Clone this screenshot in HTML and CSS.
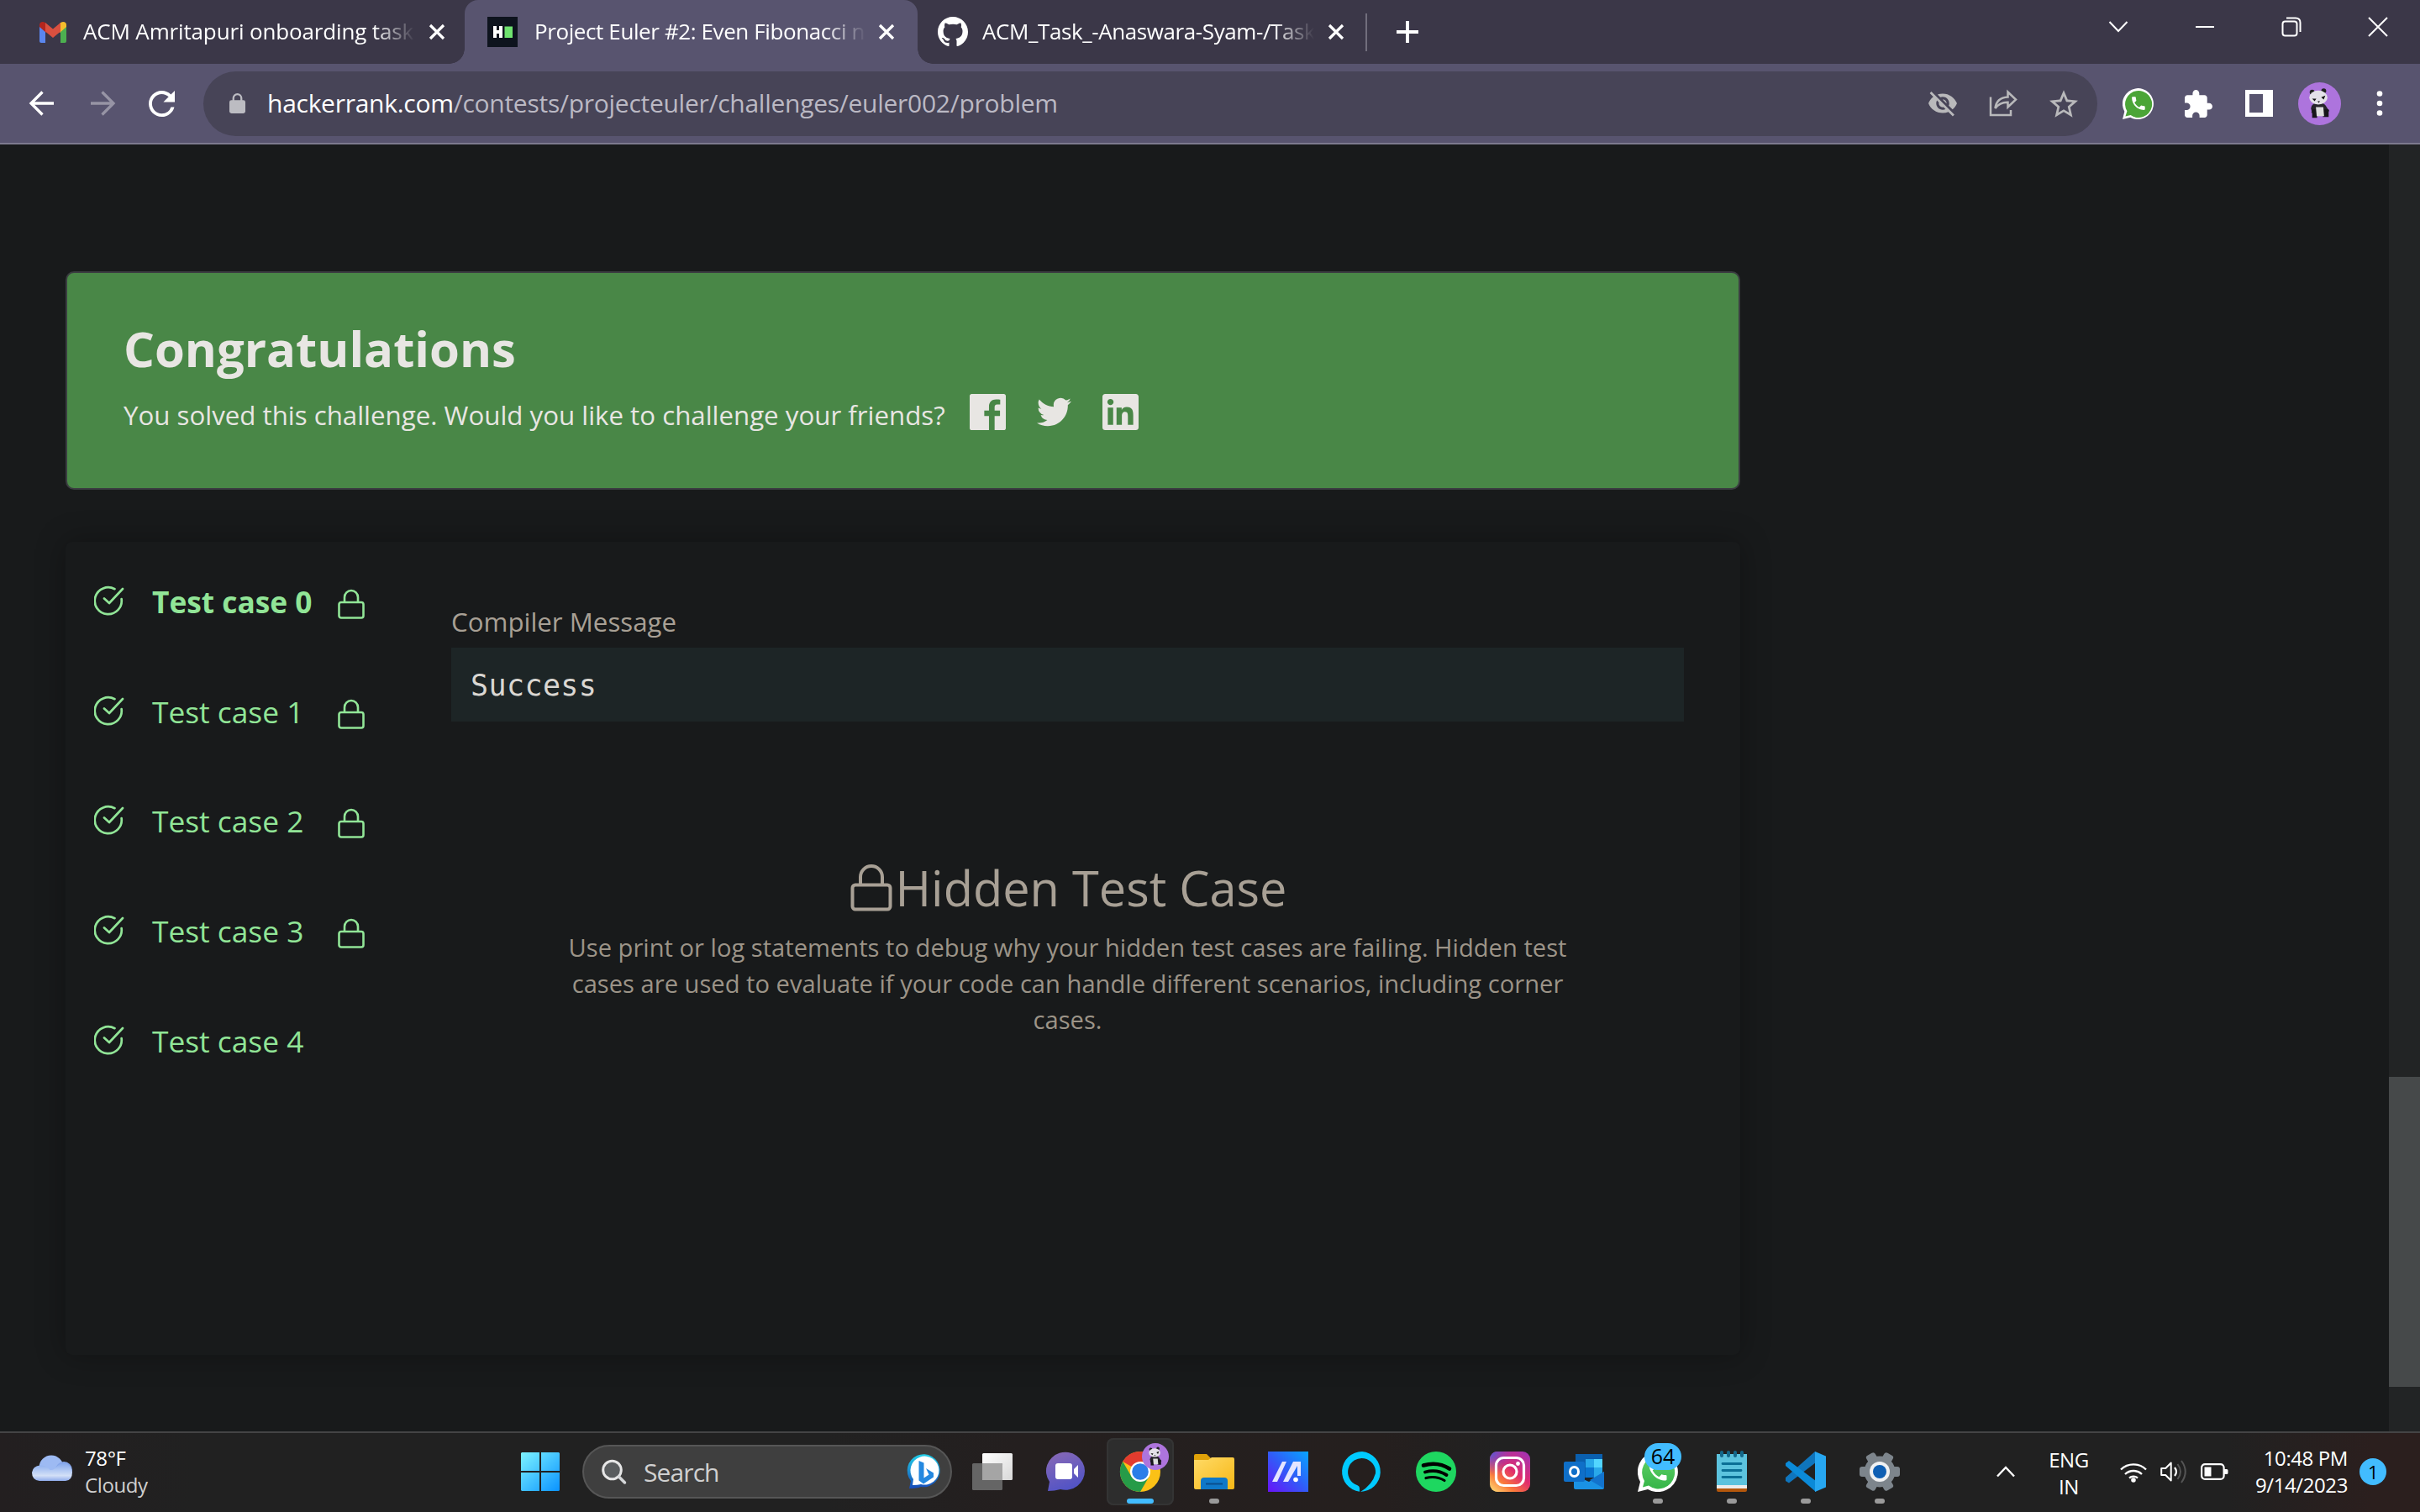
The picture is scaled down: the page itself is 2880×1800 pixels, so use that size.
FILE: index.html
```html
<!DOCTYPE html>
<html lang="en">
<head>
<meta charset="utf-8">
<title>Project Euler #2: Even Fibonacci numbers</title>
<link rel="stylesheet" href="styles.css">
</head>
<body>
<svg class="defs" width="0" height="0" aria-hidden="true">
  <symbol id="x" viewBox="0 0 20 20"><path d="M2 2l16 16M18 2L2 18" fill="none" stroke="#fff" stroke-width="3.200"/></symbol>
  <symbol id="check" viewBox="0 0 36 36"><path d="M24.500 4.200A16 16 0 1 0 32.600 16M12 15.500l6 5.500L34 4" fill="none" stroke="#91e597" stroke-width="2.700" stroke-linecap="round" stroke-linejoin="round"/></symbol>
  <symbol id="lock" viewBox="0 0 32 36"><path d="M4 16h24a2.500 2.500 0 0 1 2.500 2.500v13.500a2.500 2.500 0 0 1-2.500 2.500h-24a2.500 2.500 0 0 1-2.500-2.500v-13.500a2.500 2.500 0 0 1 2.500-2.500zM8 16v-6a8 8 0 0 1 16 0v6" fill="none" stroke="currentColor" stroke-width="2.600"/></symbol>
  <symbol id="phone" viewBox="0 0 24 24"><path d="M6.620 10.790c1.440 2.830 3.760 5.140 6.590 6.590l2.200-2.200c.27-.27.67-.36 1.020-.24 1.120.37 2.330.57 3.570.57.55 0 1 .45 1 1V20c0 .55-.45 1-1 1-9.390 0-17-7.610-17-17 0-.55.45-1 1-1h3.500c.55 0 1 .45 1 1 0 1.250.2 2.450.57 3.570.11.35.03.74-.25 1.020z" fill="#fff"/></symbol>
  <symbol id="panda" viewBox="0 0 52 52">
    <circle cx="26" cy="26" r="26" fill="#ad74dd"/>
    <circle cx="17" cy="12" r="3" fill="#222"/><circle cx="31" cy="10.500" r="3" fill="#222"/>
    <ellipse cx="25" cy="31.500" rx="9.500" ry="7" fill="#26242a"/>
    <path d="M17 30l-1 7 4 1zM33 28l5 7-5 1z" fill="#26242a"/>
    <path d="M17 33h6v10h-6zM30 33h7v9h-7z" fill="#17151a"/>
    <path d="M21.500 30h9l1 11h-9z" fill="#ddd"/>
    <ellipse cx="24.500" cy="18.500" rx="11" ry="8.500" fill="#e4e1e8"/>
    <path d="M17 20l5 0-2 3zM28 18l5-2-2 5zM23.500 23h3l-1.500 2z" fill="#111"/>
  </symbol>
  <symbol id="whatsapp" viewBox="0 0 48 48">
    <path d="M0 48l3-12A24 24 0 1 1 12 45z" fill="#fff"/>
    <path d="M6 42.500l2-7.500A19.500 19.500 0 1 1 13 40.500z" fill="url(#waG)"/>
    <use href="#phone" x="10" y="10" width="28" height="28"/>
  </symbol>
  <symbol id="whatsapp-web" viewBox="0 0 48 48">
    <path d="M0 48l3-12A24 24 0 1 1 12 45z" fill="#fff"/>
    <path d="M4.500 43.500l2.500-8A20.800 20.800 0 1 1 12.500 41.500z" fill="#4ba537"/>
    <use href="#phone" x="11" y="10" width="27" height="27"/>
  </symbol>
  <linearGradient id="waG" x1="0" y1="0" x2="0" y2="1"><stop offset="0" stop-color="#5fd067"/><stop offset="1" stop-color="#35b548"/></linearGradient>
</svg>

<header class="tabstrip">
  <div class="tab tab-mail">
    <svg width="34" height="27" viewBox="0 0 34 27"><path d="M1 4v20q0 2 2 2h5V9z" fill="#5a86ee"/><path d="M33 4v20q0 2-2 2h-5V9z" fill="#4caf50"/><path d="M1 5q0-4 4-4 2 0 4 2v11L1 7z" fill="#b3261e"/><path d="M33 5q0-4-4-4-2 0-4 2v11l8-7z" fill="#f5bd2c"/><path d="M8 2l9 7.500L26 2v10.500L17 20 8 12.500z" fill="#d9503f"/></svg>
    <span class="tab-title">ACM Amritapuri onboarding task</span>
    <svg width="20" height="20"><use href="#x"/></svg>
  </div>
  <div class="tab tab-active">
    <svg width="36" height="36" viewBox="0 0 36 36"><path fill="#0e141e" d="M0 0h36v36H0z"/><path d="M7 11h4v5h3v-5h4v14h-4v-5h-3v5H7z" fill="#fff"/><path d="M20.500 11.500H30V25h-9.500z" fill="#6fe36f"/></svg>
    <span class="tab-title">Project Euler #2: Even Fibonacci n</span>
    <svg width="20" height="20"><use href="#x"/></svg>
  </div>
  <div class="tab tab-git">
    <svg width="36" height="36" viewBox="0 0 16 16"><path fill="#fff" d="M8 0C3.580 0 0 3.580 0 8c0 3.540 2.290 6.530 5.470 7.590.4.07.55-.17.55-.38 0-.19-.01-.82-.01-1.490-2.010.37-2.530-.49-2.690-.94-.09-.23-.48-.94-.82-1.130-.28-.15-.68-.52-.01-.53.63-.01 1.080.58 1.230.82.72 1.210 1.870.87 2.330.66.07-.52.28-.87.51-1.070-1.780-.2-3.640-.89-3.640-3.950 0-.87.31-1.590.82-2.150-.08-.2-.36-1.020.08-2.120 0 0 .67-.21 2.200.82.64-.18 1.320-.27 2-.27.68 0 1.360.09 2 .27 1.530-1.040 2.200-.82 2.200-.82.44 1.100.16 1.920.08 2.120.51.56.82 1.270.82 2.150 0 3.070-1.870 3.750-3.650 3.950.29.25.54.73.54 1.480 0 1.070-.01 1.930-.01 2.200 0 .21.15.46.55.38A8.013 8.013 0 0016 8c0-4.420-3.580-8-8-8z"/></svg>
    <span class="tab-title">ACM_Task_-Anaswara-Syam-/Task</span>
    <svg width="20" height="20"><use href="#x"/></svg>
  </div>
  <div class="tab-divider"></div>
  <svg class="newtab" width="28" height="28" viewBox="0 0 28 28"><path d="M14 1v26M1 14h26" stroke="#fff" stroke-width="3.800"/></svg>
  <div class="window-controls">
    <svg width="24" height="24" viewBox="0 0 24 24"><path d="M1.500 6L12 17 22.500 6" class="thin"/></svg>
    <svg width="24" height="24" viewBox="0 0 24 24"><path d="M1 12h22" class="thin"/></svg>
    <svg width="24" height="24" viewBox="0 0 24 24"><rect x="1.500" y="5.500" width="17" height="17" rx="3" class="thin"/><path d="M6 1.500h11q5.500 0 5.500 5.500v11" class="thin"/></svg>
    <svg width="24" height="24" viewBox="0 0 24 24"><path d="M1 1l22 22M23 1L1 23" class="thin"/></svg>
  </div>
</header>

<nav class="toolbar">
  <div class="slots">
    <svg width="30" height="30" viewBox="0 0 30 30"><path d="M29 15H3M15.500 1.500L2 15l13.500 13.500" fill="none" stroke="#fff" stroke-width="3.300"/></svg>
    <svg width="30" height="30" viewBox="0 0 30 30"><path d="M1 15h26M14.500 1.500L28 15 14.500 28.500" fill="none" stroke="#9794a5" stroke-width="3.300"/></svg>
    <svg class="reload" width="31" height="31" viewBox="4 4 16 16"><path fill="#fff" d="M17.650 6.350A7.958 7.958 0 0012 4c-4.420 0-7.990 3.580-7.990 8s3.570 8 7.990 8c3.730 0 6.840-2.550 7.730-6h-2.080A5.990 5.990 0 0112 18c-3.310 0-6-2.690-6-6s2.690-6 6-6c1.660 0 3.140.69 4.220 1.780L13 11h7V4l-2.350 2.350z"/></svg>
  </div>
  <div class="omnibox">
    <svg width="19" height="26" viewBox="0 0 20 26"><path d="M5 10V6.500a5 5 0 0 1 10 0V10" fill="none" stroke="#bcbcc2" stroke-width="2.400"/><rect y="9" width="20" height="16.500" rx="2.500" fill="#bcbcc2"/></svg>
    <span class="url"><b>hackerrank.com</b>/contests/projecteuler/challenges/euler002/problem</span>
    <div class="slots">
      <svg width="34" height="34" viewBox="1 1 22 22"><path fill="#b9b9bb" d="M12 7c2.760 0 5 2.240 5 5 0 .65-.13 1.260-.36 1.830l2.920 2.920c1.510-1.260 2.700-2.890 3.430-4.750-1.730-4.390-6-7.500-11-7.500-1.400 0-2.740.25-3.980.7l2.160 2.160C10.740 7.130 11.350 7 12 7zM2 4.270l2.280 2.280.46.46C3.080 8.300 1.780 10.020 1 12c1.730 4.390 6 7.500 11 7.500 1.550 0 3.030-.3 4.380-.84l.42.42L19.730 22 21 20.730 3.270 3 2 4.270zM7.530 9.800l1.550 1.550c-.05.21-.08.43-.08.65 0 1.660 1.340 3 3 3 .22 0 .44-.03.65-.08l1.550 1.550c-.67.33-1.410.53-2.200.53-2.760 0-5-2.240-5-5 0-.79.2-1.530.53-2.200zm4.310-.78l3.150 3.150.02-.16c0-1.660-1.340-3-3-3l-.17.01z"/></svg>
      <svg width="34" height="34" viewBox="0 0 34 34"><path d="M2 9.500V31h24v-6M7.500 23c1-9 6-13 15-13.500V3.500L32 12.500 22.500 21.500v-5.800C15 15.500 11 18 7.500 23z" fill="none" stroke="#b9b9bb" stroke-width="2.500"/></svg>
      <svg width="34" height="33" viewBox="2 2 20 19"><path fill="#b9b9bb" d="M22 9.240l-7.190-.62L12 2 9.190 8.630 2 9.240l5.460 4.730L5.820 21 12 17.270 18.180 21l-1.630-7.030L22 9.240zM12 15.400l-3.760 2.270 1-4.280-3.320-2.880 4.380-.38L12 6.100l1.710 4.040 4.380.38-3.320 2.880 1 4.280L12 15.400z"/></svg>
    </div>
  </div>
  <div class="slots">
    <svg width="37" height="37"><use href="#whatsapp-web"/></svg>
    <svg width="33" height="33" viewBox="2 1 21 21"><path fill="#fff" d="M20.500 11H19V7c0-1.100-.9-2-2-2h-4V3.500C13 2.120 11.880 1 10.500 1S8 2.120 8 3.500V5H4c-1.100 0-1.990.9-1.990 2v3.800H3.500c1.490 0 2.700 1.210 2.700 2.700s-1.210 2.700-2.700 2.700H2V20c0 1.100.9 2 2 2h3.800v-1.500c0-1.490 1.210-2.700 2.700-2.700 1.490 0 2.700 1.210 2.700 2.700V22H17c1.100 0 2-.9 2-2v-4h1.500c1.380 0 2.500-1.120 2.500-2.500S21.880 11 20.500 11z"/></svg>
    <svg width="33" height="32" viewBox="0 0 33 32"><path fill="#fff" fill-rule="evenodd" d="M0 0h33v32H0zM5 5v22h16V5z"/></svg>
    <svg width="51" height="51"><use href="#panda"/></svg>
    <svg width="8" height="32" viewBox="0 0 8 32"><circle cx="4" cy="4.500" r="3.300" fill="#fff"/><circle cx="4" cy="16" r="3.300" fill="#fff"/><circle cx="4" cy="27.500" r="3.300" fill="#fff"/></svg>
  </div>
</nav>

<main class="page">
  <div class="content">
    <section class="banner">
      <h1>Congratulations</h1>
      <div class="share">
        <p>You solved this challenge. Would you like to challenge your friends?</p>
        <svg width="43" height="43" viewBox="0 0 24 24"><path fill="#e8e6e3" d="M22.676 0H1.324C.593 0 0 .593 0 1.324v21.352C0 23.408.593 24 1.324 24h11.494v-9.294H9.689v-3.621h3.129V8.410c0-3.099 1.894-4.785 4.659-4.785 1.325 0 2.464.097 2.796.141v3.240h-1.921c-1.500 0-1.792.721-1.792 1.771v2.311h3.584v3.630H16.560V24h6.115c.733 0 1.325-.592 1.325-1.324V1.324C24 .593 23.408 0 22.676 0"/></svg>
        <svg width="41" height="43" viewBox="0 0 24 24"><path fill="#e8e6e3" d="M23.953 4.570a10 10 0 01-2.825.775 4.958 4.958 0 002.163-2.723c-.951.555-2.005.959-3.127 1.184a4.920 4.920 0 00-8.384 4.482C7.690 8.095 4.067 6.130 1.640 3.162a4.822 4.822 0 00-.666 2.475c0 1.710.87 3.213 2.188 4.096a4.904 4.904 0 01-2.228-.616v.06a4.923 4.923 0 003.946 4.827 4.996 4.996 0 01-2.212.085 4.936 4.936 0 004.604 3.417 9.867 9.867 0 01-6.102 2.105c-.39 0-.779-.023-1.170-.067a13.995 13.995 0 007.557 2.209c9.053 0 13.998-7.496 13.998-13.985 0-.21 0-.42-.015-.63A9.935 9.935 0 0024 4.590z"/></svg>
        <svg width="43" height="43" viewBox="0 0 24 24"><path fill="#e8e6e3" d="M20.447 20.452h-3.554v-5.569c0-1.328-.027-3.037-1.852-3.037-1.853 0-2.136 1.445-2.136 2.939v5.667H9.351V9h3.414v1.561h.046c.477-.9 1.637-1.850 3.370-1.850 3.601 0 4.267 2.370 4.267 5.455v6.286zM5.337 7.433c-1.144 0-2.063-.926-2.063-2.065 0-1.138.92-2.063 2.063-2.063 1.140 0 2.064.925 2.064 2.063 0 1.139-.925 2.065-2.064 2.065zm1.782 13.019H3.555V9h3.564v11.452zM22.225 0H1.771C.792 0 0 .774 0 1.729v20.542C0 23.227.792 24 1.771 24h20.451C23.200 24 24 23.227 24 22.271V1.729C24 .774 23.200 0 22.222 0h.003z"/></svg>
      </div>
    </section>
    <section class="results">
      <ul class="cases">
        <li class="current"><svg width="36" height="36"><use href="#check"/></svg><span>Test case 0</span><svg class="case-lock" width="32" height="36"><use href="#lock"/></svg></li>
        <li><svg width="36" height="36"><use href="#check"/></svg><span>Test case 1</span><svg class="case-lock" width="32" height="36"><use href="#lock"/></svg></li>
        <li><svg width="36" height="36"><use href="#check"/></svg><span>Test case 2</span><svg class="case-lock" width="32" height="36"><use href="#lock"/></svg></li>
        <li><svg width="36" height="36"><use href="#check"/></svg><span>Test case 3</span><svg class="case-lock" width="32" height="36"><use href="#lock"/></svg></li>
        <li><svg width="36" height="36"><use href="#check"/></svg><span>Test case 4</span></li>
      </ul>
      <div class="detail">
        <h2>Compiler Message</h2>
        <pre>Success</pre>
        <h3><svg width="50" height="56" viewBox="0 0 50 56"><path d="M6 24.500h38a3.500 3.500 0 0 1 3.500 3.500v22a3.500 3.500 0 0 1-3.500 3.500h-38a3.500 3.500 0 0 1-3.500-3.500v-22a3.500 3.500 0 0 1 3.500-3.500zM12 24v-9a13 13 0 0 1 26 0v9" fill="none" stroke="#a8a095" stroke-width="4"/></svg><span>Hidden Test Case</span></h3>
        <p>Use print or log statements to debug why your hidden test cases are failing. Hidden test<br>cases are used to evaluate if your code can handle different scenarios, including corner<br>cases.</p>
      </div>
    </section>
  </div>
  <div class="scrollbar"><div class="thumb"></div></div>
</main>

<footer class="taskbar">
  <div class="weather">
    <svg width="48" height="31" viewBox="0 0 48 31"><defs><linearGradient id="cl" x1="0" y1="0" x2="0" y2="1"><stop offset="0" stop-color="#85a9ee"/><stop offset=".7" stop-color="#d3e0f7"/><stop offset="1" stop-color="#8fabeb"/></linearGradient></defs><circle cx="23" cy="15" r="14.500" fill="#9dbaf3"/><circle cx="38" cy="18" r="10" fill="#86a6ea"/><path d="M10 12.500q7 0 11 5 4 2 9-4 5-5 11-3 6 3 7 10 0 10-8 10.500H9Q0 30 0 21q1-8 10-8.500z" fill="url(#cl)"/></svg>
    <div class="weather-text"><span>78°F</span><em>Cloudy</em></div>
  </div>
  <div class="apps">
    <div class="app"><svg width="46" height="46" viewBox="0 0 46 46"><defs><linearGradient id="wn" gradientUnits="userSpaceOnUse" x1="0" y1="0" x2="46" y2="46"><stop offset="0" stop-color="#7df3ff"/><stop offset="1" stop-color="#0a93ff"/></linearGradient></defs><path d="M1 0h21v22H0V1zM24 0h21l1 1v21H24zM0 24h22v22H1l-1-1zM24 24h22v21l-1 1H24z" fill="url(#wn)"/></svg></div>
    <div class="search">
      <svg width="30" height="30" viewBox="0 0 30 30"><circle cx="12.500" cy="13" r="10.800" fill="#5a5d5f" stroke="#e6e6e6" stroke-width="3"/><path d="M20.500 21l7 7" stroke="#d5d7d9" stroke-width="3.500" stroke-linecap="round"/></svg>
      <span>Search</span>
      <svg width="40" height="40" viewBox="0 0 40 40"><defs><linearGradient id="bg" x1="0" y1="0" x2="0" y2="1"><stop offset="0" stop-color="#21cfe8"/><stop offset="1" stop-color="#174ab8"/></linearGradient></defs><path d="M0 40l2-9A19.500 19.500 0 1 1 14 38q-5 2-14 2z" fill="url(#bg)"/><path d="M4 36l1-7A17 17 0 1 1 14 35q-4 1-10 1z" fill="#fff"/><path d="M11.500 7l6 2.500v18l6-4-3.500-7.500 9 5.500v5l-12 8-5.500-4z" fill="#2488e0"/></svg>
    </div>
    <div class="app"><svg width="48" height="44" viewBox="0 0 48 44"><defs><linearGradient id="tv" x1="0" y1="0" x2="1" y2="1"><stop offset="0" stop-color="#fff"/><stop offset="1" stop-color="#d8d8d8"/></linearGradient></defs><rect x="12" width="36" height="32" rx="1.500" fill="url(#tv)"/><rect y="12" width="36" height="32" rx="1.500" fill="#656565"/><path d="M12 12h24v20H12z" fill="#a5a5a5"/></svg></div>
    <div class="app"><svg width="48" height="46" viewBox="-2 0 48 46"><defs><linearGradient id="ch" x1="0" y1="0" x2=".4" y2="1"><stop offset="0" stop-color="#8b6ab5"/><stop offset="1" stop-color="#5354c5"/></linearGradient></defs><path d="M0 46l2-11A23 22.500 0 1 1 15 44q-7 2-15 2z" fill="url(#ch)"/><rect x="9" y="13" width="20" height="19" rx="3" fill="#fff"/><path d="M31 20l5-5v15l-5-5z" fill="#fff"/></svg></div>
    <div class="app open focus"><svg width="48" height="48" viewBox="0 0 48 48"><circle cx="24" cy="24" r="24" fill="#fbc116"/><path d="M24 24L3.200 12A24 24 0 0 1 44.800 12H24z" fill="#e33b2e"/><path d="M13.600 30L3.200 12A24 24 0 0 0 24 48l10.400-18z" fill="#269b48"/><circle cx="24" cy="24" r="12" fill="#fff"/><circle cx="24" cy="24" r="9.800" fill="#2a7de9"/></svg><svg class="who" width="32" height="32"><use href="#panda"/></svg></div>
    <div class="app open"><svg width="48" height="42" viewBox="0 0 48 42"><defs><linearGradient id="fo" x1="0" y1="0" x2="1" y2="1"><stop offset="0" stop-color="#ffdb67"/><stop offset="1" stop-color="#f7b716"/></linearGradient></defs><path d="M0 10V2q0-2 2-2h13l5 5v5z" fill="#e0a108"/><path d="M0 7h17l4-3h25q2 0 2 2v34q0 2-2 2H2q-2 0-2-2z" fill="url(#fo)"/><path d="M8 42V32q0-4 4-4h24q4 0 4 4v10z" fill="#0f78c8"/><path d="M14 34.500h20v2H14z" fill="#0b4e8d"/></svg></div>
    <div class="app"><svg width="48" height="48" viewBox="0 0 48 48"><defs><linearGradient id="ma" x1="0" y1="1" x2="1" y2="0"><stop offset="0" stop-color="#6a12f7"/><stop offset=".5" stop-color="#315cf8"/><stop offset="1" stop-color="#07a5ff"/></linearGradient></defs><path fill="url(#ma)" d="M0 0h48v48H0z"/><path d="M5 36l12-24h5L11 36zM18 36l12-24h9v17h-4V17L24 36z" fill="#e4e5ff"/><circle cx="33" cy="33.500" r="2.800" fill="#fff"/></svg></div>
    <div class="app"><svg width="48" height="48" viewBox="0 0 48 48"><path d="M24 0A24 24 0 0 0 21 47.800V44q0-3-3-4a16.500 16.500 0 1 1 22-14Q36 40 22 47.900A24 24 0 0 0 24 0z" fill="#00caff"/></svg></div>
    <div class="app"><svg width="48" height="48" viewBox="0 0 48 48"><circle cx="24" cy="24" r="24" fill="#1ed760"/><path d="M9 16.500q17-5 31 4" fill="none" stroke="#000" stroke-width="4.600" stroke-linecap="round"/><path d="M11 24.500q14-4 25.500 3.500" fill="none" stroke="#000" stroke-width="3.900" stroke-linecap="round"/><path d="M12 31.500q12-3 22 3" fill="none" stroke="#000" stroke-width="3.200" stroke-linecap="round"/></svg></div>
    <div class="app"><svg width="48" height="48" viewBox="0 0 48 48"><defs><linearGradient id="ig" x1=".9" y1="0" x2=".1" y2="1"><stop offset="0" stop-color="#a233b4"/><stop offset=".45" stop-color="#e02c6d"/><stop offset=".75" stop-color="#fb7a3a"/><stop offset="1" stop-color="#ffd270"/></linearGradient><radialGradient id="ig2" cx="0" cy="0" r=".6"><stop offset="0" stop-color="#4a5fe0"/><stop offset="1" stop-color="#7a3bd0" stop-opacity="0"/></radialGradient></defs><rect width="48" height="48" rx="9" fill="url(#ig)"/><rect width="48" height="48" rx="9" fill="url(#ig2)"/><rect x="7.500" y="7.500" width="33" height="33" rx="9" fill="none" stroke="#fff" stroke-width="3.200"/><circle cx="24" cy="24" r="8" fill="none" stroke="#fff" stroke-width="3.200"/><circle cx="33.500" cy="14.500" r="2.400" fill="#fff"/></svg></div>
    <div class="app"><svg width="48" height="48" viewBox="0 0 48 48"><path d="M14 3h32v28H14z" fill="#0a5fae"/><path d="M26 9h10v10H26z" fill="#29a8ea"/><path d="M36 9h10v10H36z" fill="#52d5ff"/><path d="M26 19h10v12H26z" fill="#0a74cf"/><path d="M36 19h10v12H36z" fill="#29a8ea"/><path d="M12 28l18 8 18-12v19q0 2-2 2H14q-2 0-2-2z" fill="#1a92e4"/><path d="M48 24v20L31 34z" fill="#1273cd"/><rect y="12" width="25" height="24" rx="2" fill="#0f6fc8"/><ellipse cx="12.500" cy="24" rx="5" ry="5.500" fill="none" stroke="#fff" stroke-width="3"/></svg></div>
    <div class="app open"><svg width="48" height="48"><use href="#whatsapp"/></svg><span class="badge">64</span></div>
    <div class="app open"><svg width="36" height="48" viewBox="0 0 36 48"><path d="M0 44h36v2q0 2-2 2H2q-2 0-2-2z" fill="#b4570c"/><path d="M0 39h36v5H0z" fill="#ececec"/><path d="M0 3h36v37H0z" fill="#5cc3de"/><path d="M6 1v4M14 1v4M22 1v4M30 1v4" stroke="#14688a" stroke-width="4" stroke-linecap="round"/><path d="M7 14.500h22M7 22.500h22M7 30.500h22" stroke="#0b6f96" stroke-width="2.800" stroke-linecap="round"/></svg></div>
    <div class="app open"><svg width="48" height="48" viewBox="0 0 48 48"><path d="M35 0L0 31v4l4 2.500L36 13z" fill="#0f75bd"/><path d="M0 14l4-3L36 35v13L0 17z" fill="#0b8ad8"/><path d="M35 0l13 5.500v37L35 48z" fill="#27a7f1"/></svg></div>
    <div class="app open"><svg width="48" height="48" viewBox="0 0 48 48"><g fill="#7d858c"><circle cx="24" cy="24" r="18.500"/><rect x="0" y="18" width="48" height="12" rx="3"/><rect x="0" y="18" width="48" height="12" rx="3" transform="rotate(60 24 24)"/><rect x="0" y="18" width="48" height="12" rx="3" transform="rotate(120 24 24)"/></g><circle cx="24" cy="24" r="12" fill="#f0f1f2"/><circle cx="24" cy="24" r="8" fill="#0f5fb3"/></svg></div>
  </div>
  <div class="tray">
    <svg class="up" width="22" height="14" viewBox="0 0 22 14"><path d="M1 12.500L11 2l10 10.500" fill="none" stroke="#fff" stroke-width="2.400"/></svg>
    <div class="lang"><span>ENG</span><span>IN</span></div>
    <div class="status">
      <svg width="32" height="28" viewBox="0 0 32 28"><path d="M1 11.500a21.500 21.500 0 0 1 30 0M6 17a14.500 14.500 0 0 1 20 0M11 21.500a8 8 0 0 1 10 0" fill="none" stroke="#fff" stroke-width="2.400"/><circle cx="16" cy="24" r="2.800" fill="#fff"/></svg>
      <svg width="32" height="28" viewBox="0 0 32 28"><path d="M1.200 10h5l6.500-6.500v21L6.200 18h-5z" fill="none" stroke="#fff" stroke-width="2" stroke-linejoin="round"/><path d="M17 9q4 5 0 10" fill="none" stroke="#fff" stroke-width="2.200"/><path d="M20.500 5q7 9 0 18M25 1q9.500 13 0 26" fill="none" stroke="#555" stroke-width="2"/></svg>
      <svg width="33" height="20" viewBox="0 0 33 20"><rect x="1.100" y="1.100" width="26.500" height="17.800" rx="4" fill="none" stroke="#fff" stroke-width="2.200"/><path d="M4.500 4.500h8v11h-8zM28 7h3q1.500 0 1.500 1.500v3Q32.500 13 31 13h-3z" fill="#fff"/></svg>
    </div>
    <div class="clock"><span>10:48 PM</span><span>9/14/2023</span></div>
    <div class="notif">1</div>
  </div>
</footer>
</body>
</html>
```
FILE: styles.css
```css
* { box-sizing: border-box; margin: 0; padding: 0; }
body {
  width: 2880px; height: 1800px; overflow: hidden;
  display: flex; flex-direction: column;
  background: #181a1b; color: #fff;
  font-family: "Open Sans", "Noto Sans", sans-serif;
}
svg { display: block; flex: none; overflow: visible; }
em { font-style: normal; }
.defs { position: absolute; }

/* Browser tabs */
.tabstrip { display: flex; height: 76px; background: #3b3748; }
.tab { display: flex; align-items: center; height: 76px; flex: none; }
.tab-mail { width: 553px; padding-left: 46px; }
.tab-active { width: 539px; padding-left: 27px; background: #58546f; border-radius: 16px 16px 0 0; position: relative; }
.tab-active::before, .tab-active::after { content: ""; position: absolute; bottom: 0; width: 18px; height: 18px; }
.tab-active::before { left: -18px; background: radial-gradient(circle at 0 0, transparent 17.5px, #58546f 18px); }
.tab-active::after { right: -18px; background: radial-gradient(circle at 100% 0, transparent 17.5px, #58546f 18px); }
.tab-git { width: 533px; padding-left: 24px; }
.tab-title {
  width: 395px; margin: 0 14px 3px 20px; overflow: hidden; white-space: nowrap;
  font-size: 26px; line-height: 60px; letter-spacing: -.4px;
  -webkit-mask-image: linear-gradient(90deg, #000 345px, transparent 395px);
  mask-image: linear-gradient(90deg, #000 345px, transparent 395px);
}
.tab-mail .tab-title { margin: 0 16px 3px 19px; letter-spacing: -.15px; }
.tab-git .tab-title { margin: 0 16px 3px 17px; }
.tab-divider { width: 2px; height: 45px; margin-top: 16px; background: #716e7c; }
.newtab { margin: 24px 0 0 34px; }
.window-controls { display: flex; margin: 0 -1px 0 auto; height: 64px; }
.window-controls svg { margin: 20px 39.5px; }
.thin { fill: none; stroke: #fff; stroke-width: 2; }

/* Address bar */
.toolbar { display: flex; align-items: center; height: 96px; background: #58546f; border-bottom: 2px solid #7d7a8e; padding-left: 14px; }
.slots { display: grid; grid-auto-flow: column; grid-auto-columns: 72px; place-items: center; }
.reload { margin-right: 3px; }
.omnibox { display: flex; align-items: center; width: 2254px; height: 77px; margin: 0 12px; padding: 0 4px 0 31px; border-radius: 39px; background: #474457; }
.url { flex: 1; margin: 0 0 1px 26px; font-size: 30px; line-height: 60px; letter-spacing: -.27px; color: #bbb9c4; white-space: nowrap; }
.url b { font-weight: 400; color: #fff; }

.page { display: flex; height: 1532px; }
.content { width: 2843px; padding: 151px 0 0 78px; }
.scrollbar { width: 37px; padding-top: 1110px; background: #222425; }
.thumb { height: 369px; background: #46494a; }

.banner { width: 1993px; height: 260px; padding: 50px 0 0 67px; background: #498747; border: 2px solid #3b3d41; border-radius: 10px; color: #e8e6e3; }
.banner h1 { font-size: 58px; line-height: 80px; }
.share { display: flex; margin-top: 14px; }
.share p { width: 1007px; padding-top: 1px; font-size: 31.250px; line-height: 48px; white-space: nowrap; }
.share svg + svg { margin-left: 37px; }

.results { display: flex; width: 1993px; height: 968px; margin-top: 62px; border-radius: 8px; background: #181a1b; box-shadow: 0 0 36px rgba(0, 0, 0, .3); }
.cases { width: 459px; padding: 4.600px 0 0 34px; list-style: none; color: #91e597; }
.cases li { display: flex; align-items: center; height: 130.750px; font-size: 35.300px; line-height: 50px; }
.cases span { width: 221px; margin-left: 33px; padding-top: 2px; white-space: nowrap; }
.cases .current { font-weight: 700; }
.case-lock { margin-top: 8px; }
.detail { width: 1467px; padding-top: 73px; }
.detail h2 { font-size: 31.250px; line-height: 44px; font-weight: 400; color: #a8a095; }
.detail pre { height: 88px; margin-top: 9px; padding: 1px 0 0 23px; background: #1d2526; color: #dad7d2; font: 35px/88px "DejaVu Sans Mono", monospace; letter-spacing: .4px; }
.detail h3 { display: flex; justify-content: center; align-items: center; gap: 4px; margin-top: 158px; padding-left: 2px; font-size: 57.700px; line-height: 80px; font-weight: 400; color: #a8a095; }
.detail p { margin-top: 10px; font-size: 29.150px; line-height: 43px; text-align: center; white-space: nowrap; color: #9c9488; }

/* Desktop taskbar */
.taskbar { display: flex; height: 96px; padding-bottom: 2px; background: linear-gradient(90deg, #231f20 0, #212121 8%, #212121 34%, #241f1f 42%, #251f1e 57%, #212121 62%, #212121 92%, #2b1f1e 98%); border-top: 2px solid #444445; }
.weather { display: flex; width: 599px; padding-left: 38px; }
.weather svg { margin-top: 26px; }
.weather-text { display: flex; flex-direction: column; margin: 14px 0 0 15px; font-size: 24px; line-height: 32px; letter-spacing: -.4px; }
.weather-text em { color: #cfcfcf; }
.apps { display: flex; align-items: center; }
.app { width: 80px; height: 80px; margin: 0 4px; display: grid; place-items: center; position: relative; }
.open::after { content: ""; position: absolute; left: 34px; bottom: 2px; width: 12px; height: 6px; border-radius: 3px; background: #9a9a9a; }
.focus { background: #2d2d2d; border-radius: 8px; box-shadow: inset 0 0 0 2px #343434; }
.focus::after { left: 24px; width: 32px; background: #42bcff; }
.who { position: absolute; right: 6px; top: 6px; }
.badge { position: absolute; left: 24px; top: 6px; width: 44px; height: 32px; border-radius: 16px; background: #42bcff; color: #000; font-size: 25px; line-height: 31px; text-align: center; }
.search { display: flex; align-items: center; width: 440px; height: 64px; margin: 0 4px 0 6px; padding: 0 9px 0 21px; border-radius: 32px; background: #3f3f3f; border: 2px solid #565656; }
.search span { flex: 1; margin: 2px 0 0 20px; font-size: 30px; line-height: 60px; letter-spacing: -.9px; color: #d0d0d0; }
.tray { display: flex; margin-left: 95px; font-size: 24px; line-height: 32px; letter-spacing: -.4px; }
.up { margin-top: 39px; }
.lang { width: 60px; margin: 16px 0 0 34px; text-align: center; display: flex; flex-direction: column; }
.status { display: flex; align-items: center; gap: 16px; margin-left: 31px; }
.clock { width: 142px; margin-top: 14px; display: flex; flex-direction: column; text-align: right; }
.notif { width: 32px; height: 32px; margin: 30px 0 0 14px; border-radius: 16px; background: #42bcff; color: #000; font-size: 22px; text-align: center; }
```
